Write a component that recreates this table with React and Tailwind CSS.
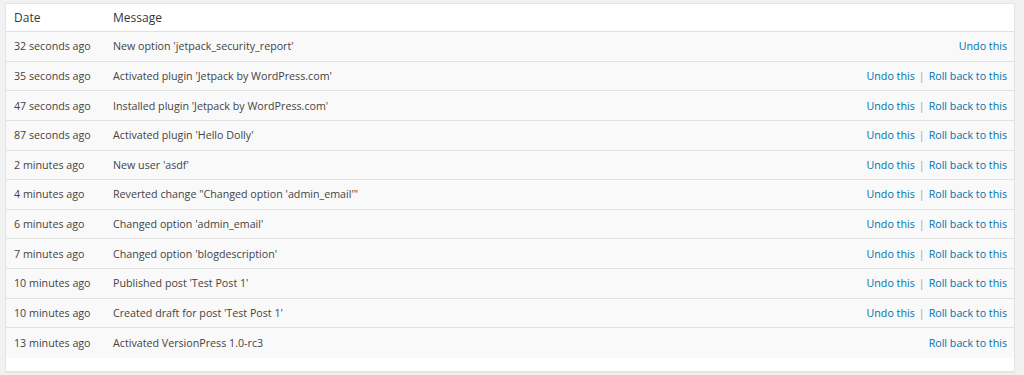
const rows = [
  { date: '32 seconds ago', message: "New option 'jetpack_security_report'", undo: true, rollback: false },
  { date: '35 seconds ago', message: "Activated plugin 'Jetpack by WordPress.com'", undo: true, rollback: true },
  { date: '47 seconds ago', message: "Installed plugin 'Jetpack by WordPress.com'", undo: true, rollback: true },
  { date: '87 seconds ago', message: "Activated plugin 'Hello Dolly'", undo: true, rollback: true },
  { date: '2 minutes ago', message: "New user 'asdf'", undo: true, rollback: true },
  { date: '4 minutes ago', message: 'Reverted change "Changed option \'admin_email\'"', undo: true, rollback: true },
  { date: '6 minutes ago', message: "Changed option 'admin_email'", undo: true, rollback: true },
  { date: '7 minutes ago', message: "Changed option 'blogdescription'", undo: true, rollback: true },
  { date: '10 minutes ago', message: "Published post 'Test Post 1'", undo: true, rollback: true },
  { date: '10 minutes ago', message: "Created draft for post 'Test Post 1'", undo: true, rollback: true },
  { date: '13 minutes ago', message: 'Activated VersionPress 1.0-rc3', undo: false, rollback: true },
];

export default function App() {
  return (
    <div className="min-h-[375px] bg-[#f1f1f1] pt-[3px] pl-[5px] font-['Open_Sans',sans-serif] text-[10.7px] text-[#444]">
      <div className="w-[1010px] border border-[#e5e5e5] bg-white pb-[13px] shadow-[0_1px_1px_rgba(0,0,0,0.04)]">
        <div className="flex h-[28px] items-center border-b border-[#e1e1e1] text-[12px] text-[#32373c]">
          <div className="w-[107px] pl-[8px]">Date</div>
          <div className="flex-1">Message</div>
        </div>
        {rows.map((row, i) => (
          <div
            key={i}
            className="flex h-[29.64px] items-center border-b border-[#e1e1e1] bg-[#f9f9f9] last:border-b-0"
          >
            <div className="w-[107px] pl-[8px]">{row.date}</div>
            <div className="flex-1">{row.message}</div>
            <div className="pr-[7px] text-[#0073aa]">
              {row.undo && <a href="#">Undo this</a>}
              {row.undo && row.rollback && <span className="px-[4px] text-[#a0a5aa]">|</span>}
              {row.rollback && <a href="#">Roll back to this</a>}
            </div>
          </div>
        ))}
      </div>
    </div>
  );
}
